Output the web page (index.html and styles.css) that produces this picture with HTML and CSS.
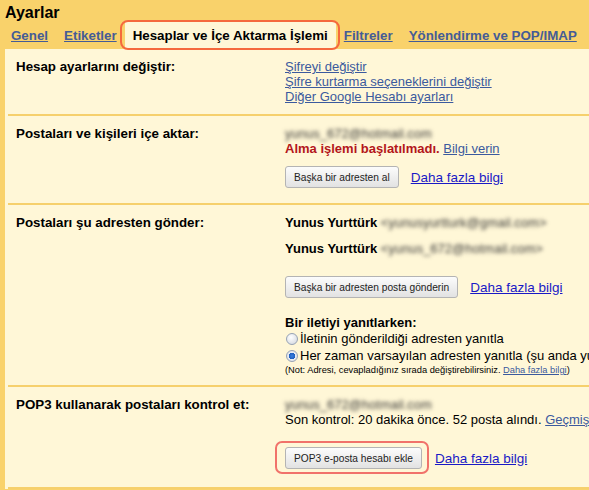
FILE: index.html
```html
<!DOCTYPE html>
<html lang="tr">
<head>
<meta charset="utf-8">
<title>Ayarlar</title>
<link rel="stylesheet" href="styles.css">
</head>
<body>
<div class="title">Ayarlar</div>
<div class="tabs">
  <a class="tab" href="#">Genel</a>
  <a class="tab" href="#">Etiketler</a>
  <span class="tab active">Hesaplar ve İçe Aktarma İşlemi</span>
  <a class="tab" href="#">Filtreler</a>
  <a class="tab" href="#">Yönlendirme ve POP/IMAP</a>
</div>
<div class="panel">
  <div class="section s1">
    <div class="label">Hesap ayarlarını değiştir:</div>
    <div class="value">
      <a class="link" href="#">Şifreyi değiştir</a>
      <a class="link" href="#">Şifre kurtarma seçeneklerini değiştir</a>
      <a class="link" href="#">Diğer Google Hesabı ayarları</a>
    </div>
  </div>
  <div class="section s2">
    <div class="label">Postaları ve kişileri içe aktar:</div>
    <div class="value">
      <div class="line"><span class="blur">yunus_672@hotmail.com</span></div>
      <div class="line"><span class="error">Alma işlemi başlatılmadı.</span> <a class="link" href="#">Bilgi verin</a></div>
      <div class="btn-row">
        <button class="btn">Başka bir adresten al</button>
        <a class="more" href="#">Daha fazla bilgi</a>
      </div>
    </div>
  </div>
  <div class="section s3">
    <div class="label">Postaları şu adresten gönder:</div>
    <div class="value">
      <div class="line"><b>Yunus Yurttürk</b> <span class="blur">&lt;yunusyurtturk@gmail.com&gt;</span></div>
      <div class="line second"><b>Yunus Yurttürk</b> <span class="blur">&lt;yunus_672@hotmail.com&gt;</span></div>
      <div class="btn-row send">
        <button class="btn">Başka bir adresten posta gönderin</button>
        <a class="more" href="#">Daha fazla bilgi</a>
      </div>
      <div class="reply-title">Bir iletiyi yanıtlarken:</div>
      <div class="radio-row"><span class="radio"></span>İletinin gönderildiği adresten yanıtla</div>
      <div class="radio-row"><span class="radio checked"></span>Her zaman varsayılan adresten yanıtla (şu anda yunusyurtturk@gmail.com)</div>
      <div class="note">(Not: Adresi, cevapladığınız sırada değiştirebilirsiniz. <a class="link" href="#">Daha fazla bilgi</a>)</div>
    </div>
  </div>
  <div class="section s4">
    <div class="label">POP3 kullanarak postaları kontrol et:</div>
    <div class="value">
      <div class="line"><span class="blur">yunus_672@hotmail.com</span></div>
      <div class="line">Son kontrol: 20 dakika önce. 52 posta alındı. <a class="link" href="#">Geçmişi görüntüle</a></div>
      <div class="btn-row pop">
        <span class="highlight"><button class="btn">POP3 e-posta hesabı ekle</button></span>
        <a class="more" href="#">Daha fazla bilgi</a>
      </div>
    </div>
  </div>
</div>
</body>
</html>
```
FILE: styles.css
```css
html, body {
  margin: 0;
  padding: 0;
}
body {
  width: 589px;
  height: 490px;
  overflow: hidden;
  background: #f9d26b;
  font-family: "Liberation Sans", Arial, sans-serif;
  font-size: 13px;
  line-height: 15px;
  color: #000;
}
.title {
  font-size: 16px;
  font-weight: bold;
  line-height: 18px;
  padding: 4px 0 0 5px;
}
.tabs {
  display: flex;
  padding-left: 3px;
  height: 27px;
  white-space: nowrap;
}
.tab {
  display: block;
  padding: 0 8px;
  font-size: 13.33px;
  font-weight: bold;
  line-height: 27px;
  color: #455c96;
  text-decoration: underline;
}
.tab.active {
  position: relative;
  background: #fff7d7;
  color: #000;
  text-decoration: none;
}
.tab.active::after {
  content: "";
  position: absolute;
  left: -5px;
  right: -4px;
  top: -2px;
  bottom: -1px;
  border: 2px solid #f5693d;
  border-radius: 8px;
}
.panel {
  margin-left: 5px;
  padding-left: 3px;
  background: #fff7d7;
}
.section {
  display: grid;
  grid-template-columns: 269px minmax(0, 1fr);
  padding: 10px 0 10px 8px;
  border-bottom: 2px solid #f6d06c;
  white-space: nowrap;
}
.label {
  font-weight: bold;
  font-size: 13.33px;
}
.value {
  display: flex;
  flex-direction: column;
  align-items: flex-start;
}
.link {
  color: #3b5a9e;
  text-decoration: underline;
}
.more {
  color: #1a1ac6;
  font-size: 13.5px;
  text-decoration: underline;
}
.blur {
  color: transparent;
  text-shadow: 0 0 3px rgba(50, 50, 50, 1);
  filter: blur(1.4px);
}
.error {
  color: #b3161b;
  font-weight: bold;
}
.btn-row {
  display: flex;
  align-items: center;
  gap: 12px;
  margin-top: 10px;
}
.btn {
  box-sizing: border-box;
  height: 22px;
  padding: 0 8px;
  border: 1px solid #b4b4b4;
  border-radius: 3px;
  background: linear-gradient(#fcfcfc, #e2e2e2);
  font-family: "Liberation Sans", Arial, sans-serif;
  font-size: 10.2px;
  color: #222;
  margin: 0;
}
.s2 {
  padding-bottom: 15px;
}
.s3 .second {
  margin-top: 11px;
}
.btn-row.send {
  margin-top: 20px;
}
.reply-title {
  font-weight: bold;
  margin-top: 17px;
}
.radio-row {
  display: flex;
  align-items: center;
  height: 17px;
}
.radio {
  box-sizing: border-box;
  width: 12px;
  height: 12px;
  margin: 0 2px 0 1px;
  border-radius: 50%;
  border: 1px solid #97a3b4;
  background: radial-gradient(circle at 40% 35%, #ffffff, #cfd4dc);
}
.radio.checked {
  background: radial-gradient(circle, #3a80e0 0, #1f5fbf 3px, #e9edf3 3.5px, #d5d9e0 100%);
}
.note {
  font-size: 9.3px;
  line-height: 12px;
}
.s3 {
  padding-bottom: 9px;
}
.btn-row.pop {
  margin-top: 20px;
  gap: 13px;
}
.s4 {
  padding-bottom: 18px;
}
.highlight {
  position: relative;
  display: block;
}
.highlight::after {
  content: "";
  position: absolute;
  left: -10px;
  right: -7px;
  top: -6px;
  bottom: -5px;
  border: 2px solid #f1726a;
  border-radius: 7px;
}
```
